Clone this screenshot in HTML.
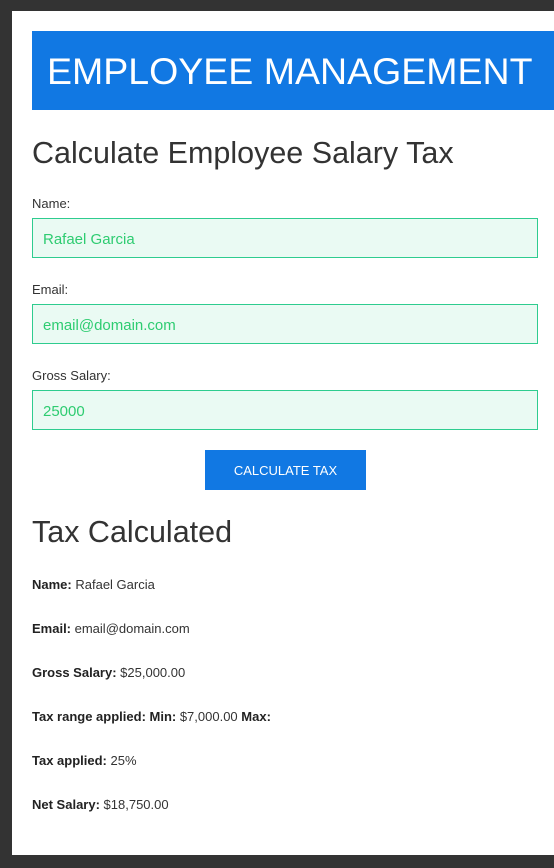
<!DOCTYPE html>
<html><head><style>
html,body{margin:0;padding:0;background:#333;width:554px;height:868px;overflow:hidden;font-family:"Liberation Sans",sans-serif;color:#333}
.page{position:absolute;left:12px;top:11px;width:560px;height:844px;background:#fff}
.hdr{position:absolute;left:32px;top:31px;width:540px;height:79px;background:#1178e3;color:#fff;font-size:37.5px;line-height:81px;padding-left:15px;box-sizing:border-box;white-space:nowrap}
.abs{position:absolute;left:32px;white-space:nowrap}
h2{margin:0;font-weight:normal;font-size:30.5px;color:#333}
.lbl{font-size:13px;color:#333}
.inp{position:absolute;left:32px;width:506px;height:40px;box-sizing:border-box;border:1px solid #2ecc8f;background:#eafaf3;color:#2ecc71;font-size:15px;line-height:42px;padding-left:10px}
.btn{position:absolute;left:205px;top:450px;width:161px;height:40px;background:#1178e3;color:#fff;font-size:13px;line-height:41px;text-align:center}
.r{font-size:13px;color:#333}
.r b{color:#222}
</style></head><body>
<div class="page"></div>
<div class="hdr">EMPLOYEE MANAGEMENT</div>
<h2 class="abs" style="top:136px">Calculate Employee Salary Tax</h2>
<div class="abs lbl" style="top:196px">Name:</div>
<div class="inp" style="top:218px">Rafael Garcia</div>
<div class="abs lbl" style="top:282px">Email:</div>
<div class="inp" style="top:304px">email@domain.com</div>
<div class="abs lbl" style="top:368px">Gross Salary:</div>
<div class="inp" style="top:390px">25000</div>
<div class="btn">CALCULATE TAX</div>
<h2 class="abs" style="top:515px">Tax Calculated</h2>
<div class="abs r" style="top:577px"><b>Name:</b> Rafael Garcia</div>
<div class="abs r" style="top:621px"><b>Email:</b> email@domain.com</div>
<div class="abs r" style="top:665px"><b>Gross Salary:</b> $25,000.00</div>
<div class="abs r" style="top:709px"><b>Tax range applied: Min:</b> $7,000.00 <b>Max:</b></div>
<div class="abs r" style="top:753px"><b>Tax applied:</b> 25%</div>
<div class="abs r" style="top:797px"><b>Net Salary:</b> $18,750.00</div>
</body></html>
